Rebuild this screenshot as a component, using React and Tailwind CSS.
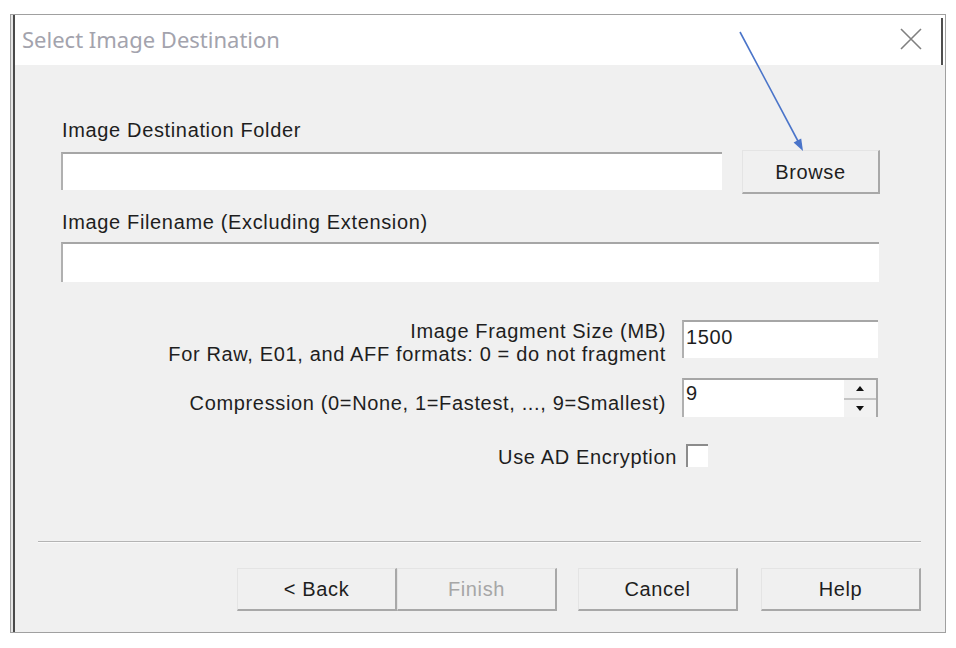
import React from "react";

const font = "font-['Liberation_Sans',Arial,sans-serif] text-[20px] tracking-[0.65px] leading-[22px] text-[#1e1e1e]";

function WinButton({ children, disabled, w = "w-[160px]", h = "h-[43px]", className = "" }) {
  return (
    <button
      className={`${w} ${h} shrink-0 bg-[#f0f0f0] border-t border-l border-t-[#e4e4e4] border-l-[#e4e4e4] border-r-2 border-b-2 border-r-[#a8a8a8] border-b-[#a8a8a8] ${font} ${disabled ? "text-[#a6a6a6]" : ""} ${className}`}
    >
      {children}
    </button>
  );
}

function TextBox({ className = "", value = "" }) {
  return (
    <div
      className={`shrink-0 bg-white border-t-2 border-l-2 border-t-[#a6a6a6] border-l-[#b0b0b0] pl-[2px] pt-[4px] ${font} tracking-[0.2px] ${className}`}
    >
      {value}
    </div>
  );
}

export default function App() {
  return (
    <div className="w-[956px] h-[648px] bg-white relative overflow-hidden">
      <div className="ml-[10px] mt-[14px] w-[936px] h-[619px] border border-[#a0a0a0] bg-[#e6e6e6] pl-[2px] flex">
        <div className="flex-1 min-w-0 flex flex-col border-l-2 border-l-[#4a4a4a]">
          {/* Title bar */}
          <div className="h-[50px] shrink-0 bg-white flex items-center">
            <div className="pl-[7px] font-['Noto_Sans','Open_Sans',sans-serif] text-[22px] text-[#a3a3ad] flex-1 pb-[2px]">
              Select Image Destination
            </div>
            <svg width="22" height="22" viewBox="0 0 22 22" className="shrink-0 mr-[19px] mb-[2px]">
              <path d="M1 1 L21 21 M21 1 L1 21" stroke="#808080" strokeWidth="1.6" fill="none" />
            </svg>
            <div className="w-[2px] shrink-0 self-stretch mt-[3px] bg-[#4f4f4f] mr-[2px]" />
          </div>

          {/* Body */}
          <div className="flex-1 bg-[#f0f0f0] pl-[46px] pt-[54px] flex flex-col">
            <div className={`${font} pl-[1px]`}>Image Destination Folder</div>
            <div className="flex items-start mt-[9px]">
              <TextBox className="w-[661px] h-[38px] mt-[2px]" />
              <WinButton w="w-[138px]" h="h-[44px]" className="ml-[20px]">Browse</WinButton>
            </div>
            <div className={`${font} pl-[1px] mt-[17px]`}>Image Filename (Excluding Extension)</div>
            <TextBox className="w-[818px] h-[40px] mt-[9px]" />

            <div className="w-[817px] flex justify-end items-start mt-[38px]">
              <div className={`${font} leading-[23px] text-right`}>
                Image Fragment Size (MB)
                <br />
                For Raw, E01, and AFF formats: 0 = do not fragment
              </div>
              <TextBox className="ml-[16px] w-[196px] h-[38px]" value="1500" />
            </div>

            <div className="w-[817px] flex justify-end items-start mt-[12px]">
              <div className={`${font} text-right mt-[14px]`}>
                Compression (0=None, 1=Fastest, ..., 9=Smallest)
              </div>
              <div className="shrink-0 ml-[16px] w-[196px] h-[39px] flex bg-white border-t-2 border-l-2 border-t-[#a6a6a6] border-l-[#b0b0b0] border-r-2 border-r-[#a8a8a8]">
                <div className={`flex-1 pl-[2px] pt-[2px] ${font} tracking-[0.2px]`}>9</div>
                <div className="w-[32px] flex flex-col bg-[#f2f2f2]">
                  <div className="flex-1 flex items-center justify-center border-b-2 border-b-[#c4c4c4]">
                    <svg width="8" height="5" viewBox="0 0 8 5">
                      <path d="M0 5 L4 0 L8 5 Z" fill="#111" />
                    </svg>
                  </div>
                  <div className="flex-1 flex items-center justify-center">
                    <svg width="8" height="5" viewBox="0 0 8 5">
                      <path d="M0 0 L8 0 L4 5 Z" fill="#111" />
                    </svg>
                  </div>
                </div>
              </div>
            </div>

            <div className="w-[647px] flex justify-end items-start mt-[27px]">
              <div className={`${font} mt-[2px]`}>Use AD Encryption</div>
              <div className="shrink-0 ml-[9px] w-[22px] h-[23px] bg-white border-t-2 border-l-2 border-t-[#8c8c8c] border-l-[#8c8c8c]" />
            </div>

            <div className="ml-[-23px] w-[883px] mt-[73px] border-t border-t-[#b4b4b4] border-b border-b-[#fafafa]" />

            <div className="ml-[176px] mt-[25px] flex items-start">
              <WinButton>&lt; Back</WinButton>
              <WinButton disabled>Finish</WinButton>
              <WinButton className="ml-[21px]">Cancel</WinButton>
              <WinButton className="ml-[23px]">Help</WinButton>
            </div>
          </div>
        </div>
      </div>

      <svg className="absolute left-0 top-0 pointer-events-none" width="956" height="648">
        <line x1="740" y1="32" x2="799" y2="143" stroke="#4a74c9" strokeWidth="1.6" />
        <polygon points="803,151 793.6,142.5 801.2,138.4" fill="#4a74c9" />
      </svg>
    </div>
  );
}
